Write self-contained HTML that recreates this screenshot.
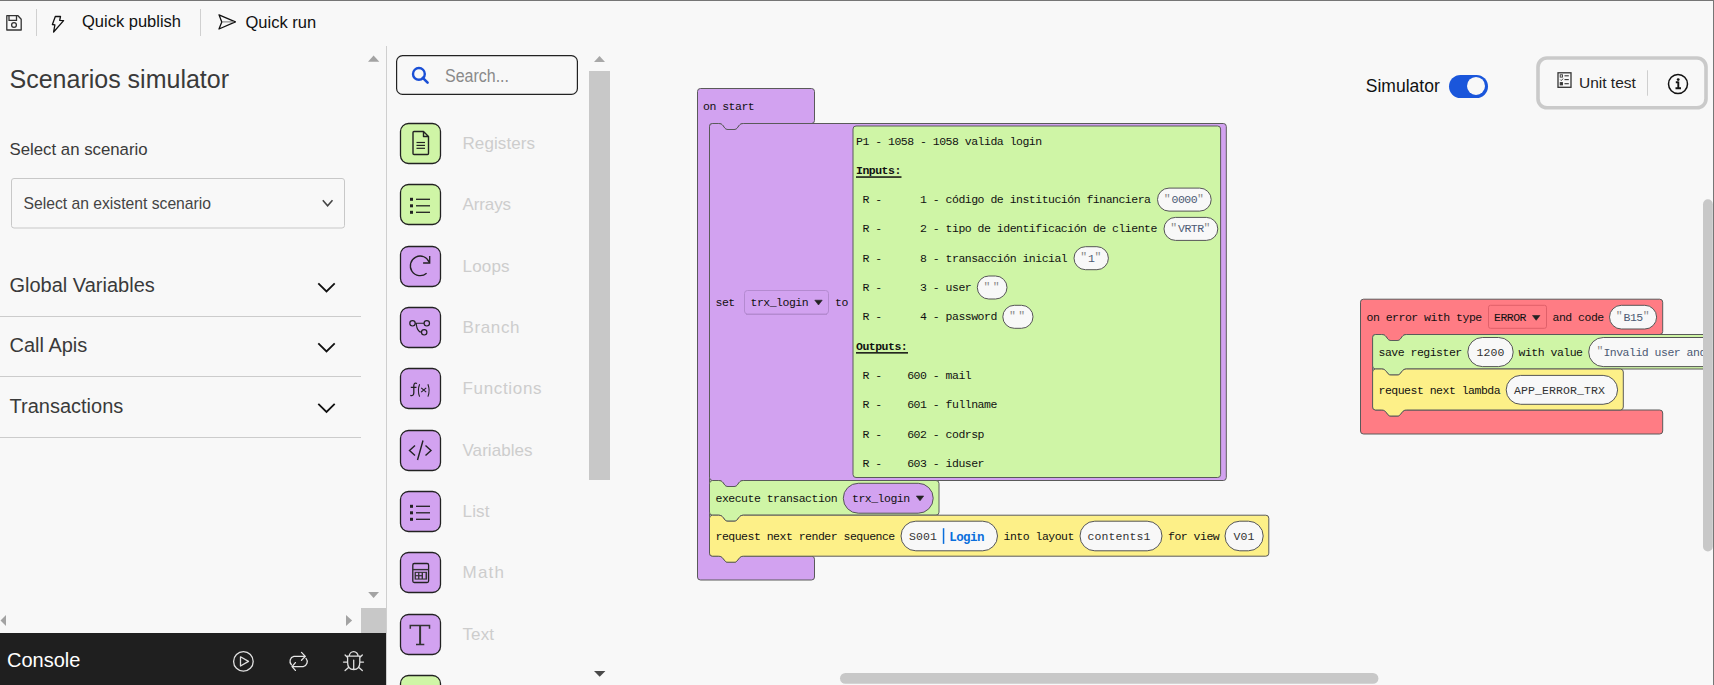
<!DOCTYPE html>
<html><head><meta charset="utf-8">
<style>
html,body{margin:0;padding:0;}
body{width:1714px;height:685px;overflow:hidden;background:#f8f8f8;position:relative;font-family:'Liberation Sans', sans-serif;}
.abs{position:absolute;}
svg{position:absolute;left:0;top:0;}
</style></head><body>
<svg width="1714" height="685" viewBox="0 0 1714 685">
<rect x="0" y="0" width="1714" height="685" fill="#f8f8f8"/>

<!-- toolbar -->
<path d="M6.8,15.7 L18,15.7 L21.2,19.2 L21.2,30 L6.8,30 Z" fill="none" stroke="#333" stroke-width="1.3" stroke-linejoin="round"/>
<path d="M9,15.7 L9,20.3 L16.5,20.3 L16.5,15.7" fill="none" stroke="#333" stroke-width="1.3"/>
<circle cx="14" cy="25" r="2.4" fill="none" stroke="#333" stroke-width="1.3"/>
<rect x="36" y="9" width="1" height="27" fill="#d0d0d0"/>
<path d="M55.3,16.5 L60.5,16.5 L59.7,20.3 L63.6,20.6 L53.6,32 L54.9,24.9 L52.4,24.5 Z" fill="none" stroke="#111" stroke-width="1.3" stroke-linejoin="round"/>
<text x="82" y="27" font-family="'Liberation Sans', sans-serif" font-size="16.5" fill="#111">Quick publish</text>
<rect x="200" y="9" width="1" height="27" fill="#d0d0d0"/>
<path d="M219,14.8 L235.4,21.9 L219,29 L221.8,21.9 Z" fill="none" stroke="#111" stroke-width="1.3" stroke-linejoin="round"/>
<line x1="222" y1="21.9" x2="234" y2="21.9" stroke="#777" stroke-width="1"/>
<text x="245.5" y="27.5" font-family="'Liberation Sans', sans-serif" font-size="16.5" fill="#111">Quick run</text>

<!-- left panel -->
<rect x="386" y="46" width="1" height="639" fill="#cfcfcf"/>
<path d="M368,61.7 L379.3,61.7 L373.6,55.6 Z" fill="#a3a3a3"/>
<text x="9.5" y="87.8" font-family="'Liberation Sans', sans-serif" font-size="25" fill="#3a3a3a">Scenarios simulator</text>
<text x="9.5" y="154.9" font-family="'Liberation Sans', sans-serif" font-size="16.8" fill="#3a3a3a">Select an scenario</text>
<rect x="11.5" y="178.5" width="333" height="49.5" rx="2.5" fill="#f8f8f8" stroke="#c8c8c8" stroke-width="1"/>
<text x="23.5" y="209" font-family="'Liberation Sans', sans-serif" font-size="15.7" fill="#444">Select an existent scenario</text>
<path d="M322.8,200.3 L327.6,205.8 L332.5,200.3" fill="none" stroke="#444" stroke-width="1.6"/>
<text x="9.5" y="292.2" font-family="'Liberation Sans', sans-serif" font-size="20" fill="#3a3a3a">Global Variables</text>
<path d="M318.3,283.3 L326.5,291.5 L334.7,283.3" fill="none" stroke="#111" stroke-width="1.8"/>
<rect x="0" y="316" width="361" height="1" fill="#cccccc"/>
<text x="9.5" y="352.2" font-family="'Liberation Sans', sans-serif" font-size="20" fill="#3a3a3a">Call Apis</text>
<path d="M318.3,343.3 L326.5,351.5 L334.7,343.3" fill="none" stroke="#111" stroke-width="1.8"/>
<rect x="0" y="376" width="361" height="1" fill="#cccccc"/>
<text x="9.5" y="413" font-family="'Liberation Sans', sans-serif" font-size="20" fill="#3a3a3a">Transactions</text>
<path d="M318.3,403.8 L326.5,412 L334.7,403.8" fill="none" stroke="#111" stroke-width="1.8"/>
<rect x="0" y="437" width="361" height="1" fill="#cccccc"/>
<path d="M368.2,592.1 L379,592.1 L373.6,597.9 Z" fill="#a3a3a3"/>
<path d="M6,614.9 L6,626 L0.5,620.5 Z" fill="#a3a3a3"/>
<path d="M346,614.9 L346,626 L352.1,620.5 Z" fill="#a3a3a3"/>
<rect x="361" y="608" width="25" height="25" fill="#c8c8c8"/>

<!-- console -->
<rect x="0" y="633" width="386" height="52" fill="#1f1f1f"/>
<text x="7" y="666.8" font-family="'Liberation Sans', sans-serif" font-size="20" fill="#ffffff">Console</text>
<circle cx="243.4" cy="661.4" r="9.8" fill="none" stroke="#e0e0e0" stroke-width="1.3"/>
<path d="M240.5,656.8 L248.5,661.4 L240.5,666 Z" fill="none" stroke="#e0e0e0" stroke-width="1.3" stroke-linejoin="round"/>
<path d="M305.3,656.4 L293.9,656.4 A4.9,5 0 0 0 291.4,664.8 M301.5,652.4 L305.3,656.4 L301.5,660.2 M306,658.4 A4.9,5 0 0 1 303.2,666.6 L292,666.6 M295.4,662.6 L292,666.6 L295.4,670.4" fill="none" stroke="#e6e6e6" stroke-width="1.3" stroke-linecap="round" stroke-linejoin="round"/>
<path d="M347.6,656.2 L359.8,656.2 L359.8,662.5 Q359.8,669.5 353.7,669.5 Q347.6,669.5 347.6,662.5 Z M349.3,656.2 A4.4,4.6 0 0 1 358.1,656.2 M353.7,660.1 L353.7,669.3 M345.1,655 L347.6,657.5 M362.3,655 L359.8,657.5 M343.5,662.1 L347.6,662.1 M359.8,662.1 L363.5,662.1 M345.1,670.5 L348.5,667.5 M362.3,670.5 L358.9,667.5" fill="none" stroke="#e0e0e0" stroke-width="1.3" stroke-linecap="round"/>

<!-- toolbox -->
<rect x="396.6" y="55.6" width="180.8" height="38.8" rx="6" fill="#f8f8f8" stroke="#222" stroke-width="1.2"/>
<circle cx="418.9" cy="73.9" r="5.9" fill="none" stroke="#1a4fd6" stroke-width="2.4"/>
<line x1="422.8" y1="77.8" x2="427.6" y2="82.6" stroke="#1a4fd6" stroke-width="2.6" stroke-linecap="round"/>
<text x="445" y="81.7" font-family="'Liberation Sans', sans-serif" font-size="17.5" fill="#8a8a8a" textLength="64" lengthAdjust="spacingAndGlyphs">Search...</text>
<path d="M594,62 L605,62 L599.5,55.9 Z" fill="#a8a8a8"/>
<rect x="589" y="71" width="21" height="409" fill="#c8c8c8"/>
<path d="M594,671 L605.4,671 L599.7,676.8 Z" fill="#4a4a4a"/>
<rect x="400.5" y="123.5" width="40" height="40" rx="8" fill="#cff5a6" stroke="#222" stroke-width="1.3"/>
<text x="462.5" y="148.7" font-family="'Liberation Sans', sans-serif" font-size="17" fill="#cdcdcd" font-weight="normal" textLength="72.5" lengthAdjust="spacing">Registers</text>
<rect x="400.5" y="184.5" width="40" height="40" rx="8" fill="#cff5a6" stroke="#222" stroke-width="1.3"/>
<text x="462.5" y="209.7" font-family="'Liberation Sans', sans-serif" font-size="17" fill="#cdcdcd" font-weight="normal" textLength="48.5" lengthAdjust="spacing">Arrays</text>
<rect x="400.5" y="246.5" width="40" height="40" rx="8" fill="#d2a2f0" stroke="#222" stroke-width="1.3"/>
<text x="462.5" y="271.7" font-family="'Liberation Sans', sans-serif" font-size="17" fill="#cdcdcd" font-weight="normal" textLength="47" lengthAdjust="spacing">Loops</text>
<rect x="400.5" y="307.5" width="40" height="40" rx="8" fill="#d2a2f0" stroke="#222" stroke-width="1.3"/>
<text x="462.5" y="332.7" font-family="'Liberation Sans', sans-serif" font-size="17" fill="#cdcdcd" font-weight="normal" textLength="57" lengthAdjust="spacing">Branch</text>
<rect x="400.5" y="368.5" width="40" height="40" rx="8" fill="#d2a2f0" stroke="#222" stroke-width="1.3"/>
<text x="462.5" y="393.7" font-family="'Liberation Sans', sans-serif" font-size="17" fill="#cdcdcd" font-weight="normal" textLength="79" lengthAdjust="spacing">Functions</text>
<rect x="400.5" y="430.5" width="40" height="40" rx="8" fill="#d2a2f0" stroke="#222" stroke-width="1.3"/>
<text x="462.5" y="455.7" font-family="'Liberation Sans', sans-serif" font-size="17" fill="#cdcdcd" font-weight="normal" textLength="70" lengthAdjust="spacing">Variables</text>
<rect x="400.5" y="491.5" width="40" height="40" rx="8" fill="#d2a2f0" stroke="#222" stroke-width="1.3"/>
<text x="462.5" y="516.7" font-family="'Liberation Sans', sans-serif" font-size="17" fill="#cdcdcd" font-weight="normal" textLength="27" lengthAdjust="spacing">List</text>
<rect x="400.5" y="552.5" width="40" height="40" rx="8" fill="#d2a2f0" stroke="#222" stroke-width="1.3"/>
<text x="462.5" y="577.7" font-family="'Liberation Sans', sans-serif" font-size="17" fill="#cdcdcd" font-weight="normal" textLength="41.5" lengthAdjust="spacing">Math</text>
<rect x="400.5" y="614.5" width="40" height="40" rx="8" fill="#d2a2f0" stroke="#222" stroke-width="1.3"/>
<text x="462.5" y="639.7" font-family="'Liberation Sans', sans-serif" font-size="17" fill="#cdcdcd" font-weight="normal" textLength="31.5" lengthAdjust="spacing">Text</text>
<rect x="400.5" y="675.5" width="40" height="40" rx="8" fill="#cff5a6" stroke="#222" stroke-width="1.3"/>
<path d="M413,132.5 Q413,131.5 414,131.5 L423.5,131.5 L428.5,136.5 L428.5,153.5 Q428.5,154.5 427.5,154.5 L414,154.5 Q413,154.5 413,153.5 Z M423.5,131.5 L423.5,136.5 L428.5,136.5" fill="none" stroke="#222" stroke-width="1.4" stroke-linejoin="round"/>
<line x1="416.5" y1="142.5" x2="425" y2="142.5" stroke="#222" stroke-width="1.2"/>
<line x1="416.5" y1="145.4" x2="425" y2="145.4" stroke="#222" stroke-width="1.2"/>
<line x1="416.5" y1="148.3" x2="425" y2="148.3" stroke="#222" stroke-width="1.2"/>
<rect x="410" y="197.8" width="3" height="3" fill="#222"/>
<line x1="416" y1="199.3" x2="430" y2="199.3" stroke="#222" stroke-width="1.3"/>
<rect x="410" y="204.3" width="3" height="3" fill="#222"/>
<line x1="416" y1="205.8" x2="430" y2="205.8" stroke="#222" stroke-width="1.3"/>
<rect x="410" y="210.8" width="3" height="3" fill="#222"/>
<line x1="416" y1="212.3" x2="430" y2="212.3" stroke="#222" stroke-width="1.3"/>
<path d="M429.4,262.6 A9.8,9.8 0 1 0 426.6,273.2" fill="none" stroke="#222" stroke-width="1.3"/><path d="M423.1,263 L429.7,263 L429.7,256" fill="none" stroke="#222" stroke-width="1.3"/>
<circle cx="412.5" cy="323.3" r="2.7" fill="none" stroke="#222" stroke-width="1.2"/><circle cx="426.8" cy="323.3" r="2.7" fill="none" stroke="#222" stroke-width="1.2"/><circle cx="424.2" cy="332.3" r="2.7" fill="none" stroke="#222" stroke-width="1.2"/><path d="M415.2,323.3 L424.1,323.3 M416.2,323.6 Q417,331.8 421.5,332.3" fill="none" stroke="#222" stroke-width="1.1"/>
<path d="M417,383.5 Q414.3,382 413.8,385.5 L413.8,393 Q413.5,396.5 410.3,395.3 M410.8,387.3 L416.5,387.3" fill="none" stroke="#222" stroke-width="1.3"/><path d="M419.6,384.2 Q417.2,390.4 419.6,396.6 M427.9,384.2 Q430.3,390.4 427.9,396.6 M421.2,387.8 L426.2,392.2 M426.2,387.8 L421.2,392.2" fill="none" stroke="#222" stroke-width="1.1"/>
<path d="M415,445.5 L409.5,450.5 L415,455.5 M425.5,445.5 L431,450.5 L425.5,455.5 M423,440.5 L417.5,460" fill="none" stroke="#222" stroke-width="1.4"/>
<rect x="410" y="504.8" width="3" height="3" fill="#222"/>
<line x1="416" y1="506.3" x2="430" y2="506.3" stroke="#222" stroke-width="1.3"/>
<rect x="410" y="511.29999999999995" width="3" height="3" fill="#222"/>
<line x1="416" y1="512.8" x2="430" y2="512.8" stroke="#222" stroke-width="1.3"/>
<rect x="410" y="517.8" width="3" height="3" fill="#222"/>
<line x1="416" y1="519.3" x2="430" y2="519.3" stroke="#222" stroke-width="1.3"/>
<rect x="412.8" y="563.5" width="15.8" height="19" rx="1.5" fill="none" stroke="#222" stroke-width="1.3"/><line x1="412.8" y1="569.6" x2="428.6" y2="569.6" stroke="#333" stroke-width="1.4"/><rect x="414.6" y="571.8" width="12.5" height="7.8" fill="#333"/><rect x="415.9" y="572.9" width="2.2" height="2.2" fill="#d2a2f0"/><rect x="419.4" y="572.9" width="2.2" height="2.2" fill="#d2a2f0"/><rect x="415.9" y="576.3" width="2.2" height="2.2" fill="#d2a2f0"/><rect x="419.4" y="576.3" width="2.2" height="2.2" fill="#d2a2f0"/><rect x="423" y="572.9" width="2.5" height="5.6" fill="#d2a2f0"/>
<path d="M410.3,628.8 L410.3,625.5 L429.5,625.5 L429.5,628.8 M416,644.5 L424.3,644.5" fill="none" stroke="#333" stroke-width="1.5"/><rect x="419.1" y="625.5" width="2" height="19" fill="#333"/>

<!-- canvas blocks -->
<g>
<path d="M697.5,91.5 A3,3 0 0 1 700.5,88.5 L811.5,88.5 A3,3 0 0 1 814.5,91.5 L814.5,120.5 A3,3 0 0 1 811.5,123.5 L743.5,123.5 C741.0,123.5 740.0,124.5 739.0,125.7 L737.0,128.3 C736.0,129.3 735.5,129.5 734.0,129.5 L728.0,129.5 C726.5,129.5 726.0,129.3 725.0,128.3 L723.0,125.7 C722.0,124.5 721.0,123.5 718.5,123.5 L712.5,123.5 A3,3 0 0 0 709.5,126.5 L709.5,553.2 A3,3 0 0 0 712.5,556.2 L718.5,556.2 C721.0,556.2 722.0,557.2 723.0,558.4000000000001 L725.0,561.0 C726.0,562.0 726.5,562.2 728.0,562.2 L734.0,562.2 C735.5,562.2 736.0,562.0 737.0,561.0 L739.0,558.4000000000001 C740.0,557.2 741.0,556.2 743.5,556.2 L811.5,556.2 A3,3 0 0 1 814.5,559.2 L814.5,577.0 A3,3 0 0 1 811.5,580.0 L700.5,580.0 A3,3 0 0 1 697.5,577.0 Z" fill="#d2a2f0" stroke="#5a5a5a" stroke-width="1"/>
<text x="703" y="110" font-family="'Liberation Mono', monospace" font-size="11.5" fill="#111" font-weight="normal" letter-spacing="-0.5"  xml:space="preserve">on start</text>
<path d="M709.5,126.5 A3,3 0 0 1 712.5,123.5 L718.5,123.5 C721.0,123.5 722.0,124.5 723.0,125.7 L725.0,128.3 C726.0,129.3 726.5,129.5 728.0,129.5 L734.0,129.5 C735.5,129.5 736.0,129.3 737.0,128.3 L739.0,125.7 C740.0,124.5 741.0,123.5 743.5,123.5 L1223.3,123.5 A3,3 0 0 1 1226.3,126.5 L1226.3,477.5 A3,3 0 0 1 1223.3,480.5 L743.5,480.5 C741.0,480.5 740.0,481.5 739.0,482.7 L737.0,485.3 C736.0,486.3 735.5,486.5 734.0,486.5 L728.0,486.5 C726.5,486.5 726.0,486.3 725.0,485.3 L723.0,482.7 C722.0,481.5 721.0,480.5 718.5,480.5 L712.5,480.5 A3,3 0 0 1 709.5,477.5 Z" fill="#d2a2f0" stroke="#5a5a5a" stroke-width="1"/>
<text x="715.5" y="305.7" font-family="'Liberation Mono', monospace" font-size="11.5" fill="#111" font-weight="normal" letter-spacing="-0.5"  xml:space="preserve">set</text>
<rect x="744.5" y="290.5" width="84" height="23.5" rx="3" fill="#d2a2f0" stroke="#b48ad0" stroke-width="1"/>
<line x1="746" y1="314.5" x2="827" y2="314.5" stroke="#b48ad0" stroke-width="1"/>
<text x="750.5" y="305.7" font-family="'Liberation Mono', monospace" font-size="11.5" fill="#111" font-weight="normal" letter-spacing="-0.5"  xml:space="preserve">trx_login</text>
<path d="M814.8,300.2 L822.1999999999999,300.2 L818.5,305.0 Z" fill="#222" stroke="#222" stroke-width="0.6" stroke-linejoin="round"/>
<text x="835" y="305.7" font-family="'Liberation Mono', monospace" font-size="11.5" fill="#111" font-weight="normal" letter-spacing="-0.5"  xml:space="preserve">to</text>
<rect x="853" y="126" width="367.6" height="351.5" rx="3" fill="#cff5a6" stroke="#5a5a5a" stroke-width="1"/>
<text x="856" y="144.5" font-family="'Liberation Mono', monospace" font-size="11.5" fill="#111" font-weight="normal" letter-spacing="-0.5"  xml:space="preserve">P1 - 1058 - 1058 valida login</text>
<text x="856" y="173.8" font-family="'Liberation Mono', monospace" font-size="11.5" fill="#111" font-weight="bold" letter-spacing="-0.5"  xml:space="preserve">Inputs:</text>
<rect x="856" y="176.3" width="45.5" height="1.5" fill="#111"/>
<text x="856" y="203.1" font-family="'Liberation Mono', monospace" font-size="11.5" fill="#111" font-weight="normal" letter-spacing="-0.5"  xml:space="preserve"> R -      1 - código de institución financiera</text>
<rect x="1157.5" y="188.1" width="53.700000000000045" height="23.0" rx="11.5" ry="11.5" fill="#f8f8f8" stroke="#555" stroke-width="1"/>
<text x="1163.8" y="201.6" font-family="'Liberation Mono', monospace" font-size="11.5" fill="#888" font-weight="normal" letter-spacing="-0.5"  xml:space="preserve">&quot;</text>
<text x="1171.5" y="203.1" font-family="'Liberation Mono', monospace" font-size="11.5" fill="#4c5a74" font-weight="normal" letter-spacing="-0.5"  xml:space="preserve">0000</text>
<text x="1197.1" y="201.6" font-family="'Liberation Mono', monospace" font-size="11.5" fill="#888" font-weight="normal" letter-spacing="-0.5"  xml:space="preserve">&quot;</text>
<text x="856" y="232.4" font-family="'Liberation Mono', monospace" font-size="11.5" fill="#111" font-weight="normal" letter-spacing="-0.5"  xml:space="preserve"> R -      2 - tipo de identificación de cliente</text>
<rect x="1164" y="217.4" width="53.799999999999955" height="23.0" rx="11.5" ry="11.5" fill="#f8f8f8" stroke="#555" stroke-width="1"/>
<text x="1170.3" y="230.9" font-family="'Liberation Mono', monospace" font-size="11.5" fill="#888" font-weight="normal" letter-spacing="-0.5"  xml:space="preserve">&quot;</text>
<text x="1178" y="232.4" font-family="'Liberation Mono', monospace" font-size="11.5" fill="#4c5a74" font-weight="normal" letter-spacing="-0.5"  xml:space="preserve">VRTR</text>
<text x="1203.6" y="230.9" font-family="'Liberation Mono', monospace" font-size="11.5" fill="#888" font-weight="normal" letter-spacing="-0.5"  xml:space="preserve">&quot;</text>
<text x="856" y="261.7" font-family="'Liberation Mono', monospace" font-size="11.5" fill="#111" font-weight="normal" letter-spacing="-0.5"  xml:space="preserve"> R -      8 - transacción inicial</text>
<rect x="1074" y="246.7" width="34.40000000000009" height="23.0" rx="11.5" ry="11.5" fill="#f8f8f8" stroke="#555" stroke-width="1"/>
<text x="1080.3" y="260.2" font-family="'Liberation Mono', monospace" font-size="11.5" fill="#888" font-weight="normal" letter-spacing="-0.5"  xml:space="preserve">&quot;</text>
<text x="1088" y="261.7" font-family="'Liberation Mono', monospace" font-size="11.5" fill="#4c5a74" font-weight="normal" letter-spacing="-0.5"  xml:space="preserve">1</text>
<text x="1094.4" y="260.2" font-family="'Liberation Mono', monospace" font-size="11.5" fill="#888" font-weight="normal" letter-spacing="-0.5"  xml:space="preserve">&quot;</text>
<text x="856" y="291.0" font-family="'Liberation Mono', monospace" font-size="11.5" fill="#111" font-weight="normal" letter-spacing="-0.5"  xml:space="preserve"> R -      3 - user</text>
<rect x="977.3" y="276.0" width="29.700000000000045" height="23.0" rx="11.5" ry="11.5" fill="#f8f8f8" stroke="#555" stroke-width="1"/>
<text x="983.5999999999999" y="289.5" font-family="'Liberation Mono', monospace" font-size="11.5" fill="#888" font-weight="normal" letter-spacing="-0.5"  xml:space="preserve">&quot;</text>
<text x="992.6999999999999" y="289.5" font-family="'Liberation Mono', monospace" font-size="11.5" fill="#888" font-weight="normal" letter-spacing="-0.5"  xml:space="preserve">&quot;</text>
<text x="856" y="320.3" font-family="'Liberation Mono', monospace" font-size="11.5" fill="#111" font-weight="normal" letter-spacing="-0.5"  xml:space="preserve"> R -      4 - password</text>
<rect x="1002.8" y="305.3" width="30.200000000000045" height="23.0" rx="11.5" ry="11.5" fill="#f8f8f8" stroke="#555" stroke-width="1"/>
<text x="1009.0999999999999" y="318.8" font-family="'Liberation Mono', monospace" font-size="11.5" fill="#888" font-weight="normal" letter-spacing="-0.5"  xml:space="preserve">&quot;</text>
<text x="1018.1999999999999" y="318.8" font-family="'Liberation Mono', monospace" font-size="11.5" fill="#888" font-weight="normal" letter-spacing="-0.5"  xml:space="preserve">&quot;</text>
<text x="856" y="349.6" font-family="'Liberation Mono', monospace" font-size="11.5" fill="#111" font-weight="bold" letter-spacing="-0.5"  xml:space="preserve">Outputs:</text>
<rect x="856" y="352.1" width="52" height="1.5" fill="#111"/>
<text x="856" y="378.9" font-family="'Liberation Mono', monospace" font-size="11.5" fill="#111" font-weight="normal" letter-spacing="-0.5"  xml:space="preserve"> R -    600 - mail</text>
<text x="856" y="408.2" font-family="'Liberation Mono', monospace" font-size="11.5" fill="#111" font-weight="normal" letter-spacing="-0.5"  xml:space="preserve"> R -    601 - fullname</text>
<text x="856" y="437.5" font-family="'Liberation Mono', monospace" font-size="11.5" fill="#111" font-weight="normal" letter-spacing="-0.5"  xml:space="preserve"> R -    602 - codrsp</text>
<text x="856" y="466.8" font-family="'Liberation Mono', monospace" font-size="11.5" fill="#111" font-weight="normal" letter-spacing="-0.5"  xml:space="preserve"> R -    603 - iduser</text>
<path d="M709.5,483.5 A3,3 0 0 1 712.5,480.5 L718.5,480.5 C721.0,480.5 722.0,481.5 723.0,482.7 L725.0,485.3 C726.0,486.3 726.5,486.5 728.0,486.5 L734.0,486.5 C735.5,486.5 736.0,486.3 737.0,485.3 L739.0,482.7 C740.0,481.5 741.0,480.5 743.5,480.5 L936.0,480.5 A3,3 0 0 1 939.0,483.5 L939.0,512.2 A3,3 0 0 1 936.0,515.2 L743.5,515.2 C741.0,515.2 740.0,516.2 739.0,517.4000000000001 L737.0,520.0 C736.0,521.0 735.5,521.2 734.0,521.2 L728.0,521.2 C726.5,521.2 726.0,521.0 725.0,520.0 L723.0,517.4000000000001 C722.0,516.2 721.0,515.2 718.5,515.2 L712.5,515.2 A3,3 0 0 1 709.5,512.2 Z" fill="#cff5a6" stroke="#5a5a5a" stroke-width="1"/>
<text x="715.5" y="501.5" font-family="'Liberation Mono', monospace" font-size="11.5" fill="#111" font-weight="normal" letter-spacing="-0.5"  xml:space="preserve">execute transaction</text>
<rect x="843.3" y="483.3" width="89.90000000000009" height="29.900000000000034" rx="14.950000000000017" ry="14.950000000000017" fill="#d2a2f0" stroke="#555" stroke-width="1"/>
<text x="852" y="501.5" font-family="'Liberation Mono', monospace" font-size="11.5" fill="#111" font-weight="normal" letter-spacing="-0.5"  xml:space="preserve">trx_login</text>
<path d="M916.3,496 L923.6999999999999,496 L920.0,500.8 Z" fill="#222" stroke="#222" stroke-width="0.6" stroke-linejoin="round"/>
<path d="M709.5,518.2 A3,3 0 0 1 712.5,515.2 L718.5,515.2 C721.0,515.2 722.0,516.2 723.0,517.4000000000001 L725.0,520.0 C726.0,521.0 726.5,521.2 728.0,521.2 L734.0,521.2 C735.5,521.2 736.0,521.0 737.0,520.0 L739.0,517.4000000000001 C740.0,516.2 741.0,515.2 743.5,515.2 L1265.8,515.2 A3,3 0 0 1 1268.8,518.2 L1268.8,553.2 A3,3 0 0 1 1265.8,556.2 L743.5,556.2 C741.0,556.2 740.0,557.2 739.0,558.4000000000001 L737.0,561.0 C736.0,562.0 735.5,562.2 734.0,562.2 L728.0,562.2 C726.5,562.2 726.0,562.0 725.0,561.0 L723.0,558.4000000000001 C722.0,557.2 721.0,556.2 718.5,556.2 L712.5,556.2 A3,3 0 0 1 709.5,553.2 Z" fill="#fdf088" stroke="#5a5a5a" stroke-width="1"/>
<text x="715.5" y="539.7" font-family="'Liberation Mono', monospace" font-size="11.5" fill="#111" font-weight="normal" letter-spacing="-0.5"  xml:space="preserve">request next render sequence</text>
<rect x="901" y="521.2" width="96.5" height="29.59999999999991" rx="14.799999999999955" ry="14.799999999999955" fill="#f8f8f8" stroke="#555" stroke-width="1"/>
<text x="909" y="539.7" font-family="'Liberation Mono', monospace" font-size="11.5" fill="#333" font-weight="normal" letter-spacing="0.1"  xml:space="preserve">S001</text>
<rect x="942.8" y="528.2" width="1.5" height="15.7" fill="#0a6fdc"/>
<text x="949.3" y="541" font-family="'Liberation Mono', monospace" font-size="12.5" fill="#0a6fdc" font-weight="bold" letter-spacing="-0.6"  xml:space="preserve">Login</text>
<text x="1003.5" y="539.7" font-family="'Liberation Mono', monospace" font-size="11.5" fill="#111" font-weight="normal" letter-spacing="-0.5"  xml:space="preserve">into layout</text>
<rect x="1080" y="521.2" width="82" height="29.59999999999991" rx="14.799999999999955" ry="14.799999999999955" fill="#f8f8f8" stroke="#555" stroke-width="1"/>
<text x="1087.5" y="539.7" font-family="'Liberation Mono', monospace" font-size="11.5" fill="#333" font-weight="normal" letter-spacing="0.1"  xml:space="preserve">contents1</text>
<text x="1168" y="539.7" font-family="'Liberation Mono', monospace" font-size="11.5" fill="#111" font-weight="normal" letter-spacing="-0.5"  xml:space="preserve">for view</text>
<rect x="1225" y="521.2" width="38.200000000000045" height="29.59999999999991" rx="14.799999999999955" ry="14.799999999999955" fill="#f8f8f8" stroke="#555" stroke-width="1"/>
<text x="1233.5" y="539.7" font-family="'Liberation Mono', monospace" font-size="11.5" fill="#333" font-weight="normal" letter-spacing="0.1"  xml:space="preserve">V01</text>
</g>
<clipPath id="wsclip"><rect x="620" y="40" width="1083" height="645"/></clipPath>
<g clip-path="url(#wsclip)">
<path d="M1360.5,302.2 A3,3 0 0 1 1363.5,299.2 L1659.7,299.2 A3,3 0 0 1 1662.7,302.2 L1662.7,331.5 A3,3 0 0 1 1659.7,334.5 L1406.6,334.5 C1404.1,334.5 1403.1,335.5 1402.1,336.7 L1400.1,339.3 C1399.1,340.3 1398.6,340.5 1397.1,340.5 L1391.1,340.5 C1389.6,340.5 1389.1,340.3 1388.1,339.3 L1386.1,336.7 C1385.1,335.5 1384.1,334.5 1381.6,334.5 L1375.6,334.5 A3,3 0 0 0 1372.6,337.5 L1372.6,407.0 A3,3 0 0 0 1375.6,410.0 L1381.6,410.0 C1384.1,410.0 1385.1,411.0 1386.1,412.2 L1388.1,414.8 C1389.1,415.8 1389.6,416.0 1391.1,416.0 L1397.1,416.0 C1398.6,416.0 1399.1,415.8 1400.1,414.8 L1402.1,412.2 C1403.1,411.0 1404.1,410.0 1406.6,410.0 L1659.7,410.0 A3,3 0 0 1 1662.7,413.0 L1662.7,431.0 A3,3 0 0 1 1659.7,434.0 L1363.5,434.0 A3,3 0 0 1 1360.5,431.0 Z" fill="#ff7c84" stroke="#5a5a5a" stroke-width="1"/>
<text x="1366.5" y="320.8" font-family="'Liberation Mono', monospace" font-size="11.5" fill="#111" font-weight="normal" letter-spacing="-0.5"  xml:space="preserve">on error with type</text>
<rect x="1488.5" y="305.3" width="58" height="23" rx="2" fill="#ff7c84" stroke="#e0606a" stroke-width="1"/>
<text x="1494" y="320.8" font-family="'Liberation Mono', monospace" font-size="11.5" fill="#111" font-weight="normal" letter-spacing="-0.5"  xml:space="preserve">ERROR</text>
<path d="M1532.5,315.5 L1539.9,315.5 L1536.2,320.3 Z" fill="#222" stroke="#222" stroke-width="0.6" stroke-linejoin="round"/>
<text x="1552.5" y="320.8" font-family="'Liberation Mono', monospace" font-size="11.5" fill="#111" font-weight="normal" letter-spacing="-0.5"  xml:space="preserve">and code</text>
<rect x="1609.5" y="305.3" width="47.09999999999991" height="23.69999999999999" rx="11.849999999999994" ry="11.849999999999994" fill="#f8f8f8" stroke="#555" stroke-width="1"/>
<text x="1615.8" y="319.3" font-family="'Liberation Mono', monospace" font-size="11.5" fill="#888" font-weight="normal" letter-spacing="-0.5"  xml:space="preserve">&quot;</text>
<text x="1623.5" y="320.8" font-family="'Liberation Mono', monospace" font-size="11.5" fill="#4c5a74" font-weight="normal" letter-spacing="-0.5"  xml:space="preserve">B15</text>
<text x="1642.7" y="319.3" font-family="'Liberation Mono', monospace" font-size="11.5" fill="#888" font-weight="normal" letter-spacing="-0.5"  xml:space="preserve">&quot;</text>
<path d="M1372.6,337.5 A3,3 0 0 1 1375.6,334.5 L1381.6,334.5 C1384.1,334.5 1385.1,335.5 1386.1,336.7 L1388.1,339.3 C1389.1,340.3 1389.6,340.5 1391.1,340.5 L1397.1,340.5 C1398.6,340.5 1399.1,340.3 1400.1,339.3 L1402.1,336.7 C1403.1,335.5 1404.1,334.5 1406.6,334.5 L1769.6,334.5 A3,3 0 0 1 1772.6,337.5 L1772.6,366.0 A3,3 0 0 1 1769.6,369.0 L1406.6,369.0 C1404.1,369.0 1403.1,370.0 1402.1,371.2 L1400.1,373.8 C1399.1,374.8 1398.6,375.0 1397.1,375.0 L1391.1,375.0 C1389.6,375.0 1389.1,374.8 1388.1,373.8 L1386.1,371.2 C1385.1,370.0 1384.1,369.0 1381.6,369.0 L1375.6,369.0 A3,3 0 0 1 1372.6,366.0 Z" fill="#cff5a6" stroke="#5a5a5a" stroke-width="1"/>
<text x="1378.5" y="355.5" font-family="'Liberation Mono', monospace" font-size="11.5" fill="#111" font-weight="normal" letter-spacing="-0.5"  xml:space="preserve">save register</text>
<rect x="1467.8" y="337.5" width="45.40000000000009" height="29.100000000000023" rx="14.550000000000011" ry="14.550000000000011" fill="#f8f8f8" stroke="#555" stroke-width="1"/>
<text x="1476.5" y="355.5" font-family="'Liberation Mono', monospace" font-size="11.5" fill="#333" font-weight="normal" letter-spacing="0.1"  xml:space="preserve">1200</text>
<text x="1518.5" y="355.5" font-family="'Liberation Mono', monospace" font-size="11.5" fill="#111" font-weight="normal" letter-spacing="-0.5"  xml:space="preserve">with value</text>
<rect x="1588.7" y="337.5" width="211.29999999999995" height="29.100000000000023" rx="14.550000000000011" ry="14.550000000000011" fill="#f8f8f8" stroke="#555" stroke-width="1"/>
<text x="1596.5" y="354" font-family="'Liberation Mono', monospace" font-size="11.5" fill="#888" font-weight="normal" letter-spacing="-0.5"  xml:space="preserve">&quot;</text>
<text x="1603.4" y="355.5" font-family="'Liberation Mono', monospace" font-size="11.5" fill="#4c5a74" font-weight="normal" letter-spacing="-0.5"  xml:space="preserve">Invalid user and</text>
<path d="M1372.6,372 A3,3 0 0 1 1375.6,369 L1381.6,369 C1384.1,369 1385.1,370 1386.1,371.2 L1388.1,373.8 C1389.1,374.8 1389.6,375 1391.1,375 L1397.1,375 C1398.6,375 1399.1,374.8 1400.1,373.8 L1402.1,371.2 C1403.1,370 1404.1,369 1406.6,369 L1620.3,369 A3,3 0 0 1 1623.3,372 L1623.3,407 A3,3 0 0 1 1620.3,410 L1406.6,410 C1404.1,410 1403.1,411 1402.1,412.2 L1400.1,414.8 C1399.1,415.8 1398.6,416 1397.1,416 L1391.1,416 C1389.6,416 1389.1,415.8 1388.1,414.8 L1386.1,412.2 C1385.1,411 1384.1,410 1381.6,410 L1375.6,410 A3,3 0 0 1 1372.6,407 Z" fill="#fdf088" stroke="#5a5a5a" stroke-width="1"/>
<text x="1378.5" y="393.5" font-family="'Liberation Mono', monospace" font-size="11.5" fill="#111" font-weight="normal" letter-spacing="-0.5"  xml:space="preserve">request next lambda</text>
<rect x="1506.2" y="375.4" width="111.39999999999986" height="28.900000000000034" rx="14.450000000000017" ry="14.450000000000017" fill="#f8f8f8" stroke="#555" stroke-width="1"/>
<text x="1514" y="393.5" font-family="'Liberation Mono', monospace" font-size="11.5" fill="#333" font-weight="normal" letter-spacing="0.1"  xml:space="preserve">APP_ERROR_TRX</text>
</g>

<!-- simulator & unit test -->
<text x="1365.8" y="91.9" font-family="'Liberation Sans', sans-serif" font-size="17.5" fill="#111">Simulator</text>
<rect x="1449" y="75" width="39" height="23" rx="11.5" fill="#1a56db"/>
<circle cx="1476" cy="85.9" r="9" fill="#f8f8f8"/>
<rect x="1538" y="58" width="168" height="49.8" rx="9" fill="#f8f8f8" stroke="#cacaca" stroke-width="3.6"/>
<rect x="1558" y="72.8" width="13" height="14.5" fill="none" stroke="#333" stroke-width="1.3"/>
<rect x="1560.2" y="74.8" width="2.3" height="2.3" fill="none" stroke="#333" stroke-width="0.9"/>
<line x1="1564.5" y1="75.8" x2="1568.8" y2="75.8" stroke="#333" stroke-width="1.1"/>
<path d="M1560.3,79.6 L1561.3,80.6 L1563,78.6" fill="none" stroke="#333" stroke-width="0.9"/>
<line x1="1564.5" y1="79.6" x2="1568.8" y2="79.6" stroke="#333" stroke-width="1.1"/>
<rect x="1560.2" y="82.6" width="2.3" height="2.3" fill="#333" stroke="#333" stroke-width="0.9"/>
<line x1="1564.5" y1="83.7" x2="1568.8" y2="83.7" stroke="#333" stroke-width="1.1"/>
<text x="1579" y="88.1" font-family="'Liberation Sans', sans-serif" font-size="15.5" fill="#222">Unit test</text>
<rect x="1647" y="70.3" width="1" height="25.4" fill="#cfcfcf"/>
<circle cx="1678" cy="84" r="9.5" fill="none" stroke="#111" stroke-width="1.5"/>
<circle cx="1678.2" cy="79.6" r="1.4" fill="#111"/>
<path d="M1675.8,82.3 L1678.3,82.3 M1678.3,81.6 L1678.3,88 M1675.5,88.3 L1681,88.3" fill="none" stroke="#111" stroke-width="1.9"/>

<!-- workspace scrollbars -->
<rect x="1703" y="199.3" width="9.8" height="352.2" rx="4.9" fill="#c8c8c8"/>
<rect x="840" y="673" width="538.4" height="10.8" rx="5.4" fill="#c8c8c8"/>

<!-- frame -->
<rect x="0" y="0" width="1714" height="1" fill="#767676"/>
<rect x="1713" y="0" width="1" height="685" fill="#767676"/>
</svg>
</body></html>
